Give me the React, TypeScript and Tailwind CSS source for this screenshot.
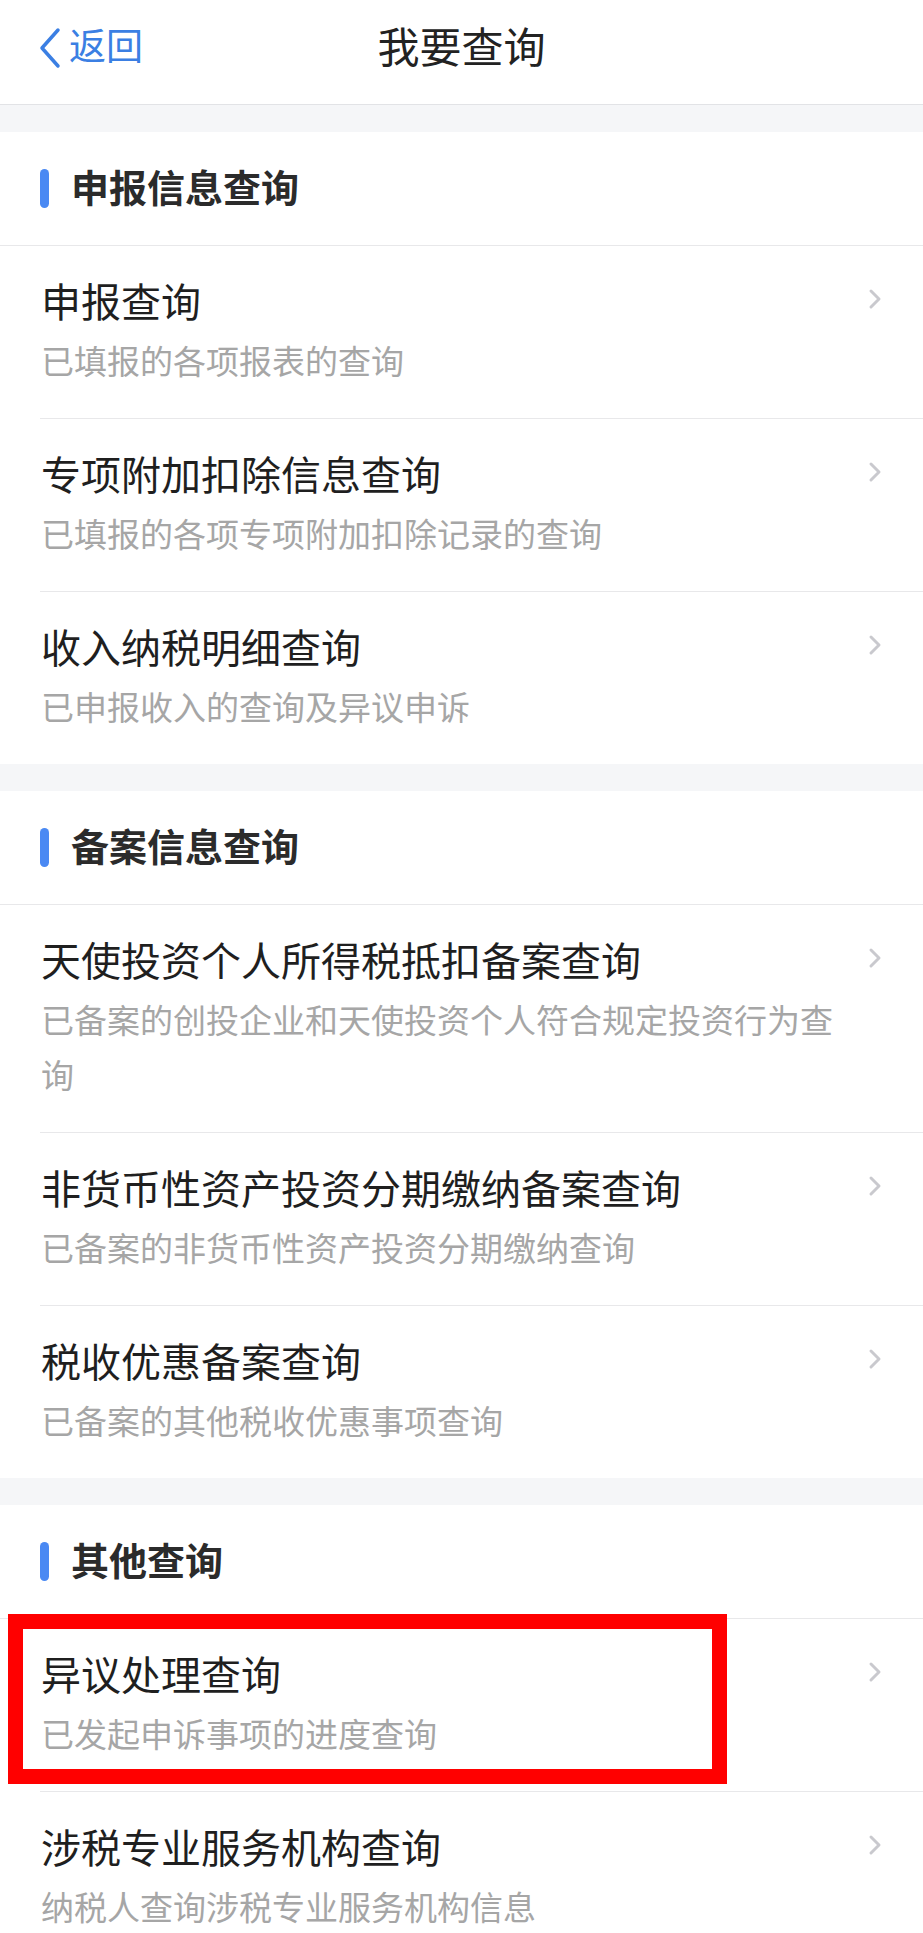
import React from "react";

type Item = { title: string; sub: string; highlight?: boolean };
type Section = { title: string; items: Item[] };

const sections: Section[] = [
  {
    title: "申报信息查询",
    items: [
      { title: "申报查询", sub: "已填报的各项报表的查询" },
      { title: "专项附加扣除信息查询", sub: "已填报的各项专项附加扣除记录的查询" },
      { title: "收入纳税明细查询", sub: "已申报收入的查询及异议申诉" },
    ],
  },
  {
    title: "备案信息查询",
    items: [
      {
        title: "天使投资个人所得税抵扣备案查询",
        sub: "已备案的创投企业和天使投资个人符合规定投资行为查询",
      },
      { title: "非货币性资产投资分期缴纳备案查询", sub: "已备案的非货币性资产投资分期缴纳查询" },
      { title: "税收优惠备案查询", sub: "已备案的其他税收优惠事项查询" },
    ],
  },
  {
    title: "其他查询",
    items: [
      { title: "异议处理查询", sub: "已发起申诉事项的进度查询", highlight: true },
      { title: "涉税专业服务机构查询", sub: "纳税人查询涉税专业服务机构信息" },
    ],
  },
];

function Chevron() {
  return (
    <svg width="16" height="22" viewBox="0 0 16 22" className="shrink-0">
      <path d="M4 3 L12 11 L4 19" fill="none" stroke="#c9c9ce" strokeWidth="3" strokeLinecap="round" strokeLinejoin="round" />
    </svg>
  );
}

function Row({ item, first }: { item: Item; first: boolean }) {
  return (
    <div className="relative">
      {!first && <div className="ml-[40px] h-px bg-[#e8e8ea]" />}
      <div className="flex items-start pl-[41px] pr-[40px] pt-[25px] pb-[30px]">
        <div className="flex-1 min-w-0">
          <div className="text-[40px] leading-[58px] text-[#1f1f1f] whitespace-nowrap">{item.title}</div>
          <div className="mt-[4px] text-[33px] leading-[55px] text-[#a6a6a6]">{item.sub}</div>
        </div>
        <div className="ml-[16px] mt-[17px]">
          <Chevron />
        </div>
      </div>
      {item.highlight && (
        <div className="absolute left-[8px] top-[-5px] w-[719px] h-[170px] border-[15px] border-[#ff0000]" />
      )}
    </div>
  );
}

export default function App() {
  return (
    <div className="w-[923px] h-[1933px] overflow-hidden bg-white font-['Noto_Sans_CJK_SC','Noto_Sans',sans-serif]">
      <div className="relative h-[105px] border-b border-[#e2e3e6] bg-white">
        <div className="absolute left-[36px] top-[26px] flex items-center">
          <svg width="28" height="44" viewBox="0 0 28 44">
            <path d="M22 4 L6 22 L22 40" fill="none" stroke="#3b7fe3" strokeWidth="3.5" strokeLinecap="round" strokeLinejoin="round" />
          </svg>
          <span className="ml-[5px] text-[37px] leading-none text-[#3b7fe3] relative top-[-4px]">返回</span>
        </div>
        <div className="absolute inset-x-0 top-0 h-[90px] flex items-center justify-center pointer-events-none">
          <span className="text-[42px] leading-none text-[#222]">我要查询</span>
        </div>
      </div>
      {sections.map((s) => (
        <div key={s.title}>
          <div className="h-[27px] bg-[#f5f6f8]" />
          <div className="h-[114px] border-b border-[#e8e8ea] flex items-center pl-[40px]">
            <div className="w-[9px] h-[39px] rounded-full bg-[#4a89f3]" />
            <span className="ml-[22px] mb-[6px] text-[38px] font-bold leading-none text-[#2b2b2b]">{s.title}</span>
          </div>
          {s.items.map((it, i) => (
            <Row key={it.title} item={it} first={i === 0} />
          ))}
        </div>
      ))}
    </div>
  );
}
